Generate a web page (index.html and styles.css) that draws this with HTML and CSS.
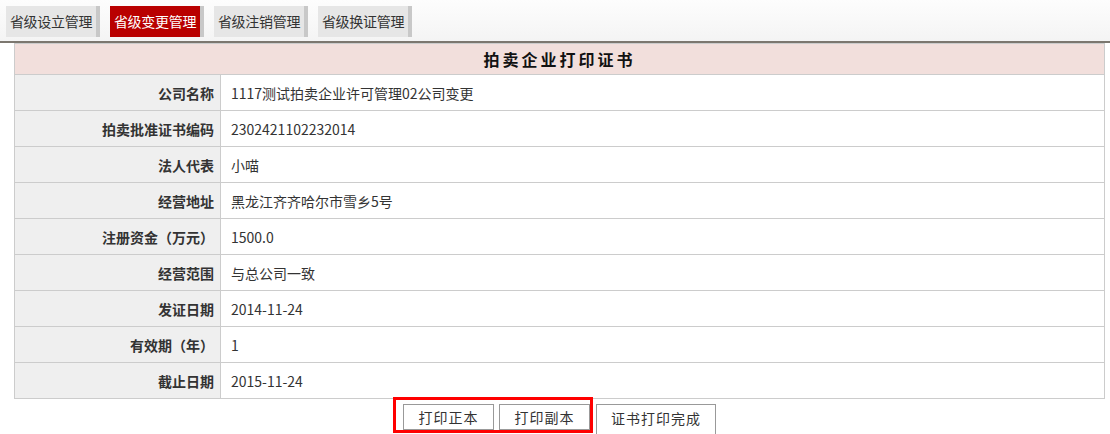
FILE: index.html
```html
<!DOCTYPE html>
<html lang="zh-CN">
<head>
    <meta charset="UTF-8">
    <title>拍卖企业打印证书</title>
    <link rel="stylesheet" href="styles.css">
</head>
<body>
    <div class="topbar">
        <a class="tab">省级设立管理</a>
        <a class="tab active">省级变更管理</a>
        <a class="tab">省级注销管理</a>
        <a class="tab">省级换证管理</a>
    </div>
    <div class="content">
        <table class="cert">
            <tr class="head">
                <th colspan="2" class="title">拍卖企业打印证书</th>
            </tr>
            <tr><td class="label">公司名称</td><td class="value">1117测试拍卖企业许可管理02公司变更</td></tr>
            <tr><td class="label">拍卖批准证书编码</td><td class="value">2302421102232014</td></tr>
            <tr><td class="label">法人代表</td><td class="value">小喵</td></tr>
            <tr><td class="label">经营地址</td><td class="value">黑龙江齐齐哈尔市雪乡5号</td></tr>
            <tr><td class="label">注册资金（万元）</td><td class="value">1500.0</td></tr>
            <tr><td class="label">经营范围</td><td class="value">与总公司一致</td></tr>
            <tr><td class="label">发证日期</td><td class="value">2014-11-24</td></tr>
            <tr><td class="label">有效期（年）</td><td class="value">1</td></tr>
            <tr><td class="label">截止日期</td><td class="value">2015-11-24</td></tr>
        </table>
        <div class="actions">
            <span class="mark">
                <button class="btn">打印正本</button>
                <button class="btn">打印副本</button>
            </span>
            <button class="btn wide">证书打印完成</button>
        </div>
    </div>
</body>
</html>
```

FILE: styles.css
```css
body {
    margin: 0;
    font-family: "Noto Sans CJK SC", "Liberation Sans", sans-serif;
    font-size: 14px;
    color: #333;
    background-color: #fff;
}
.topbar {
    height: 35px;
    padding: 6px 0 0 6px;
    display: flex;
    gap: 10px;
    background: linear-gradient(#fdfdfd, #f4f4f4);
    border-bottom: 2px solid #7c776f;
}
.tab {
    width: 90px;
    height: 31px;
    line-height: 31px;
    text-align: center;
    background-color: #e6e6e6;
    border-right: 4px solid #c8c8c8;
    color: #333;
    font-size: 14px;
    letter-spacing: -0.3px;
    cursor: pointer;
}
.tab.active {
    background-color: #b90000;
    color: #fff;
}
.content {
    margin: 0 5px 0 14px;
}
.cert {
    width: 100%;
    border-collapse: collapse;
    border: 1px solid #cccccc;
}
.cert td, .cert th {
    border: 1px solid #cccccc;
    padding: 0;
}
.cert tr {
    height: 36px;
}
.cert tr.head {
    height: 31px;
}
.title {
    background-color: #f2dfdc;
    color: #111;
    font-size: 16px;
    font-weight: bold;
    letter-spacing: 3px;
    text-align: center;
}
.label {
    width: 199px;
    padding-right: 6px !important;
    background-color: #efefef;
    text-align: right;
    font-weight: bold;
    color: #333;
}
.value {
    padding-left: 10px !important;
}
.actions {
    display: flex;
    justify-content: center;
    align-items: flex-start;
    gap: 3px;
}
.mark {
    display: flex;
    gap: 5px;
    height: 26px;
    padding: 4px 0 0 7px;
    margin: -2px 0 0 -10px;
    border: 3px solid #ff0000;
}
.actions > .btn {
    margin-top: 5px;
    height: 32px;
}
.btn {
    width: 91px;
    height: 26px;
    padding: 0;
    background-color: #fff;
    border: 1px solid #999;
    color: #333;
    font-family: "Noto Sans CJK SC", sans-serif;
    font-size: 14px;
    letter-spacing: 1px;
    cursor: pointer;
}
.btn.wide {
    width: 120px;
    padding-bottom: 4px;
}
```
